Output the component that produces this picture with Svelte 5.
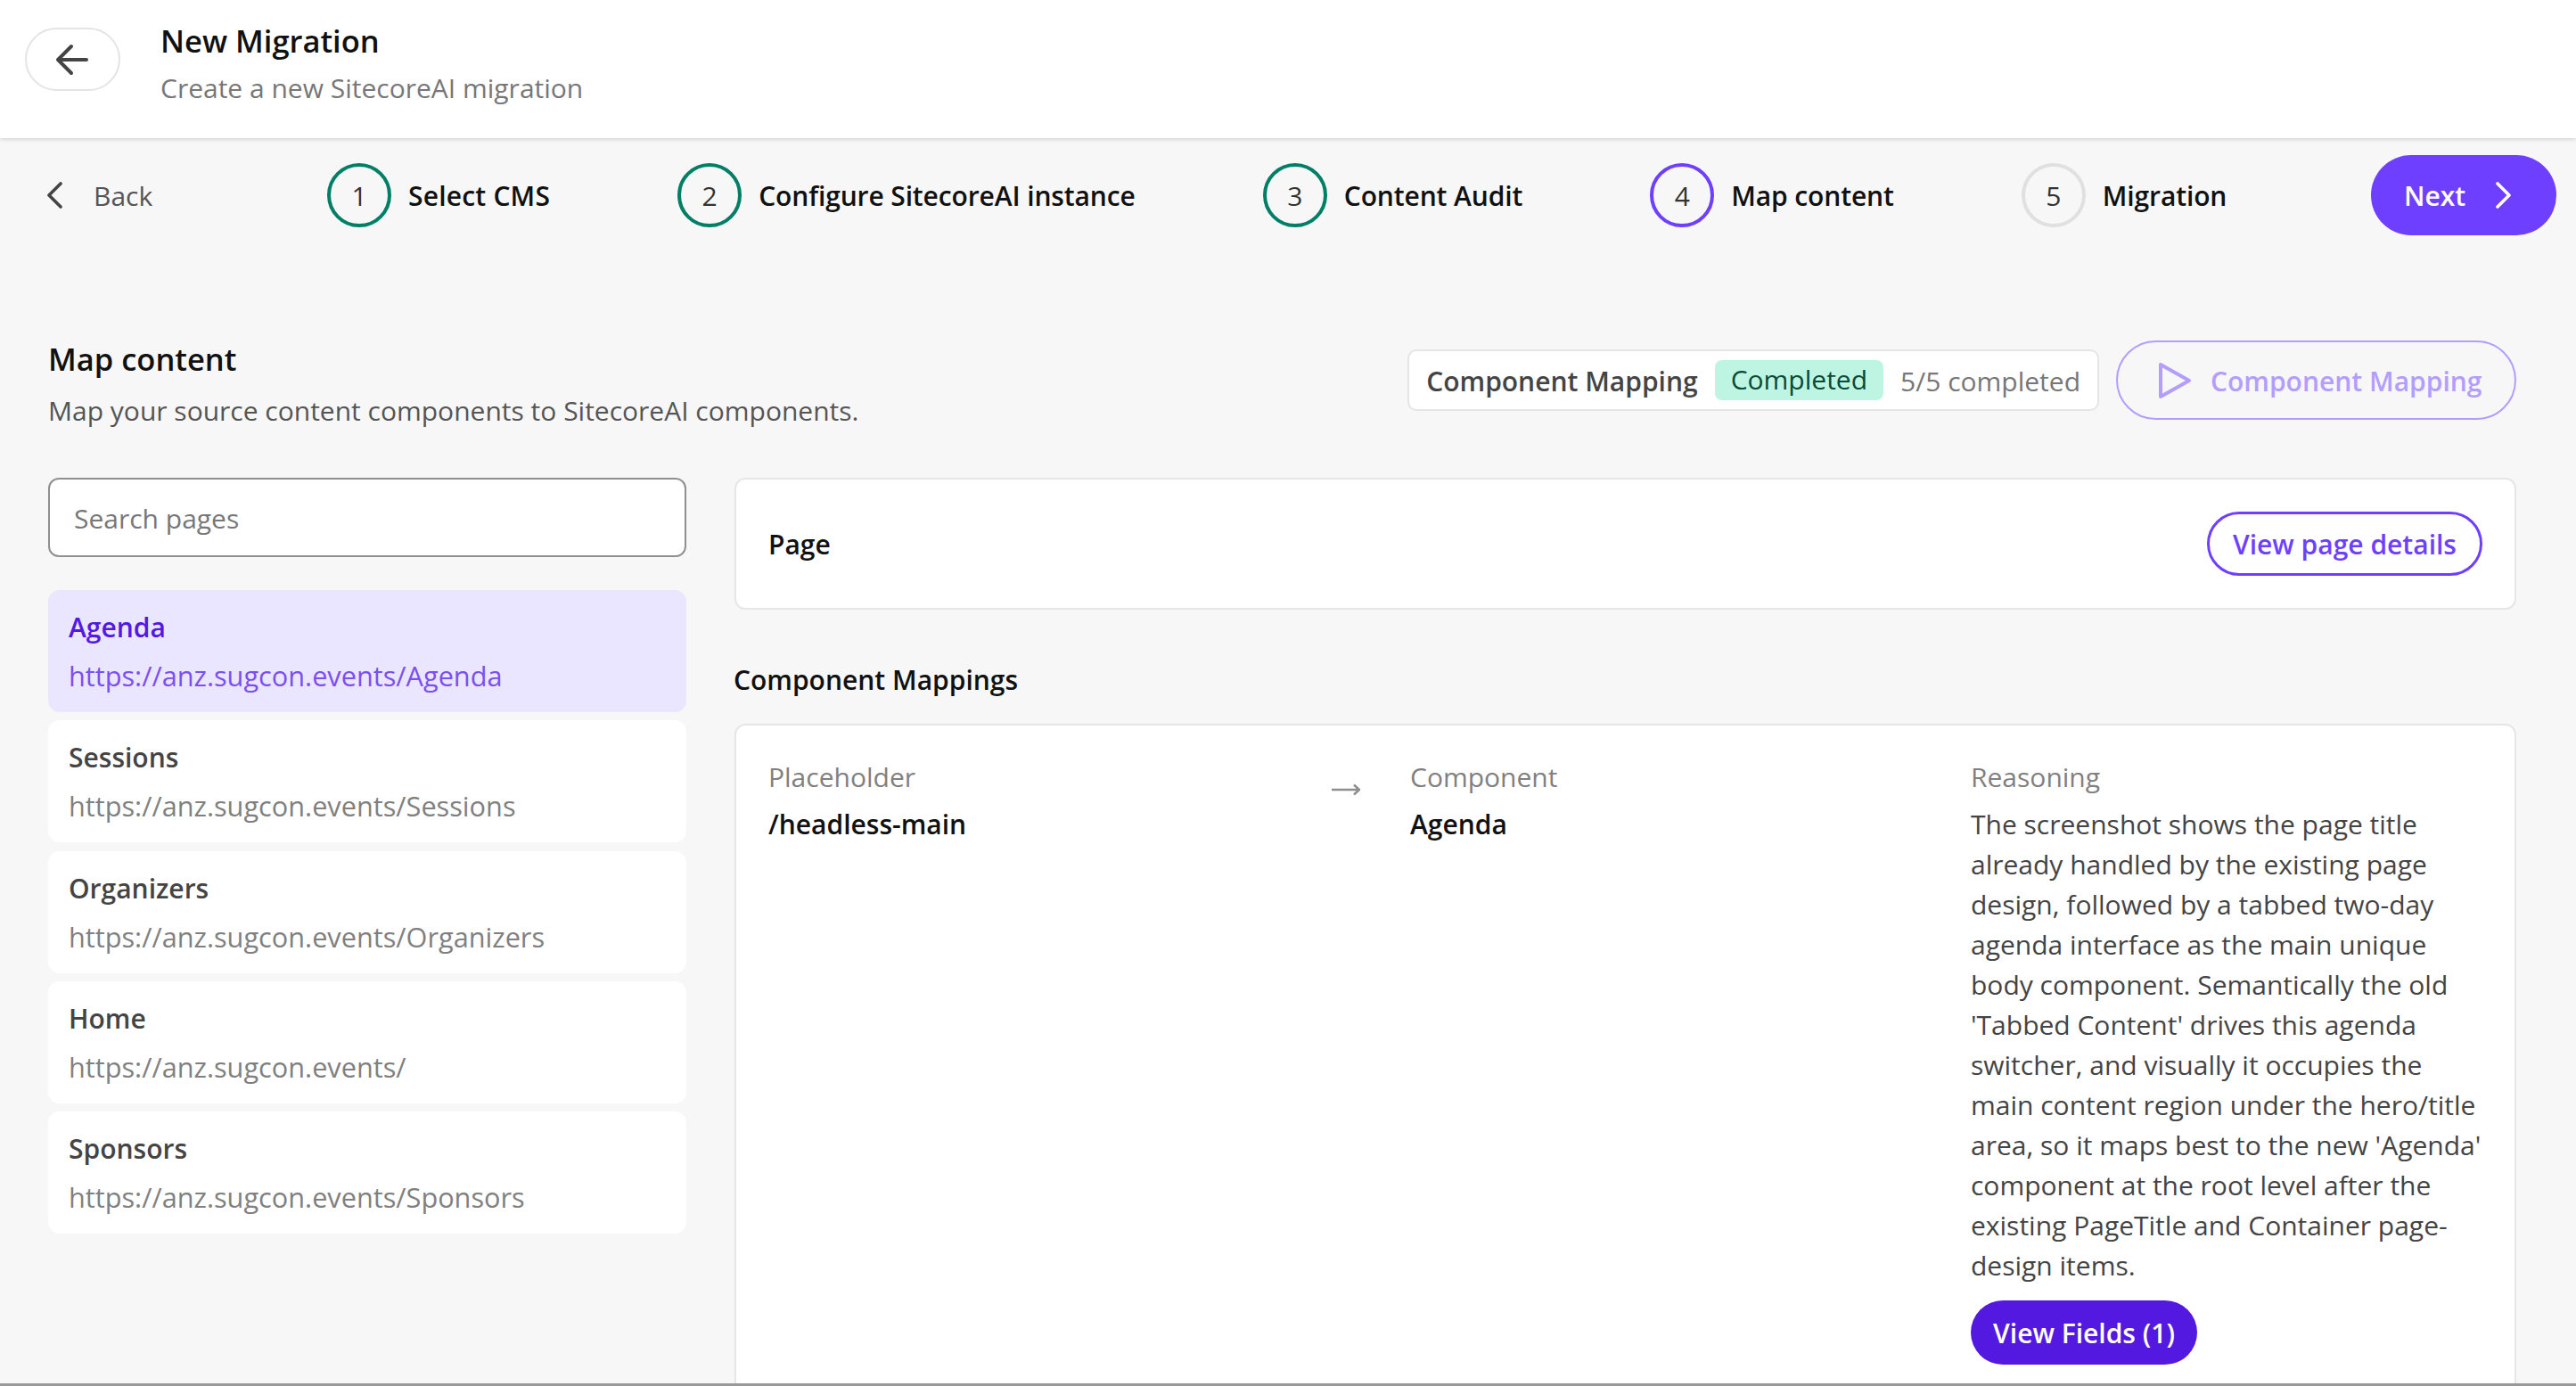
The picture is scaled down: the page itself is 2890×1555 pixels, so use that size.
<script>
  const steps = [
    { n: 1, label: "Select CMS", state: "done" },
    { n: 2, label: "Configure SitecoreAI instance", state: "done" },
    { n: 3, label: "Content Audit", state: "done" },
    { n: 4, label: "Map content", state: "active" },
    { n: 5, label: "Migration", state: "todo" }
  ];

  const pages = [
    { name: "Agenda", url: "https://anz.sugcon.events/Agenda" },
    { name: "Sessions", url: "https://anz.sugcon.events/Sessions" },
    { name: "Organizers", url: "https://anz.sugcon.events/Organizers" },
    { name: "Home", url: "https://anz.sugcon.events/" },
    { name: "Sponsors", url: "https://anz.sugcon.events/Sponsors" }
  ];

  const reasoning = [
    "The screenshot shows the page title",
    "already handled by the existing page",
    "design, followed by a tabbed two-day",
    "agenda interface as the main unique",
    "body component. Semantically the old",
    "'Tabbed Content' drives this agenda",
    "switcher, and visually it occupies the",
    "main content region under the hero/title",
    "area, so it maps best to the new 'Agenda'",
    "component at the root level after the",
    "existing PageTitle and Container page-",
    "design items."
  ];

  let selected = "Agenda";
</script>

<div class="page">
  <header class="topbar">
    <button class="round-back" aria-label="Go back">
      <svg width="40" height="40" viewBox="0 0 40 40" fill="none" stroke="#444" stroke-width="4" stroke-linecap="round" stroke-linejoin="round">
        <path d="M36 20H5M19 5 4 20l15 15" />
      </svg>
    </button>
    <div class="topbar-text">
      <h1>New Migration</h1>
      <p>Create a new SitecoreAI migration</p>
    </div>
  </header>

  <nav class="stepper">
    <button class="back-link">
      <svg width="20" height="30" viewBox="0 0 20 30" fill="none" stroke="#444" stroke-width="3.6" stroke-linecap="round" stroke-linejoin="round">
        <path d="M16 2 3 15l13 13" />
      </svg>
      <span>Back</span>
    </button>
    <ol class="steps">
      {#each steps as step}
        <li class="step {step.state}">
          <span class="circle">{step.n}</span>
          <span class="step-label">{step.label}</span>
        </li>
      {/each}
    </ol>
    <button class="next">
      <span>Next</span>
      <svg width="20" height="30" viewBox="0 0 20 30" fill="none" stroke="#fff" stroke-width="3.6" stroke-linecap="round" stroke-linejoin="round">
        <path d="M4 2l13 13L4 28" />
      </svg>
    </button>
  </nav>

  <main class="content">
    <div class="section-head">
      <div>
        <h2>Map content</h2>
        <p>Map your source content components to SitecoreAI components.</p>
      </div>
      <div class="section-actions">
        <div class="status">
          <span class="status-name">Component Mapping</span>
          <span class="badge">Completed</span>
          <span class="status-count">5/5 completed</span>
        </div>
        <button class="run" disabled>
          <svg width="40" height="42" viewBox="0 0 40 42" fill="none" stroke="#b39dff" stroke-width="4" stroke-linejoin="round">
            <path d="M4 3v36l32-18z" />
          </svg>
          <span>Component Mapping</span>
        </button>
      </div>
    </div>

    <div class="columns">
      <aside class="sidebar">
        <input class="search" type="text" placeholder="Search pages" />
        <ul class="page-list">
          {#each pages as p}
            <li class="page-item" class:selected={p.name === selected}>
              <div class="page-name">{p.name}</div>
              <div class="page-url">{p.url}</div>
            </li>
          {/each}
        </ul>
      </aside>

      <section class="detail">
        <div class="card page-card">
          <span class="page-title">Page</span>
          <button class="outline">View page details</button>
        </div>

        <h3>Component Mappings</h3>

        <div class="card mapping">
          <div class="col">
            <div class="label">Placeholder</div>
            <div class="value">/headless-main</div>
          </div>
          <div class="arrow">
            <svg width="32" height="16" viewBox="0 0 32 16" fill="none" stroke="#8f8f8f" stroke-width="2.6">
              <path d="M0 9h31M25 3.5 31 9l-6 5.5" />
            </svg>
          </div>
          <div class="col">
            <div class="label">Component</div>
            <div class="value">Agenda</div>
          </div>
          <div class="col reason">
            <div class="label">Reasoning</div>
            <p>
              {#each reasoning as line}
                <span>{line}</span>
              {/each}
            </p>
            <button class="fields">View Fields (1)</button>
          </div>
        </div>
      </section>
    </div>
  </main>
  <div class="edge"></div>
</div>

<style>
  :global(body) {
    margin: 0;
    background: #f7f7f7;
    font-family: "Open Sans", "Noto Sans", sans-serif;
  }

  button {
    font-family: inherit;
    cursor: pointer;
  }

  .page {
    width: 2890px;
    height: 1555px;
    overflow: hidden;
    display: flex;
    flex-direction: column;
    position: relative;
    color: #111;
    font-size: 30px;
  }

  .topbar {
    height: 155px;
    flex: none;
    background: #fff;
    box-shadow: 0 1px 5px rgba(0, 0, 0, 0.18);
    display: flex;
    align-items: flex-start;
    padding: 31px 0 0 28px;
    box-sizing: border-box;
    gap: 45px;
    position: relative;
  }

  .round-back {
    width: 107px;
    height: 71px;
    border-radius: 36px;
    border: 2px solid #e4e4e4;
    background: #fff;
    display: flex;
    align-items: center;
    justify-content: center;
    padding: 0 1px 0 0;
  }

  .topbar-text {
    margin-top: -9px;
  }

  h1 {
    margin: 0;
    font-size: 34.5px;
    font-weight: 600;
    line-height: 48px;
    color: #111;
  }

  .topbar-text p {
    margin: 8px 0 0;
    font-size: 30px;
    line-height: 42px;
    color: #777;
  }

  .stepper {
    display: flex;
    align-items: center;
    height: 90px;
    margin-top: 19px;
    padding: 0 22px 0 52px;
    flex: none;
  }

  .back-link {
    display: flex;
    align-items: center;
    gap: 33px;
    background: none;
    border: 0;
    padding: 0;
    font-size: 30px;
    color: #555;
    width: 315px;
  }

  .steps {
    list-style: none;
    margin: 0;
    padding: 0;
    display: flex;
    gap: 143px;
    flex: 1;
  }

  .step {
    display: flex;
    align-items: center;
    gap: 19px;
  }

  .step:first-child .step-label {
    letter-spacing: 0.2px;
  }

  .circle {
    width: 72px;
    height: 72px;
    box-sizing: border-box;
    border-radius: 50%;
    border: 4px solid #007f66;
    display: flex;
    align-items: center;
    justify-content: center;
    font-size: 30px;
    color: #333;
  }

  .step.active .circle {
    border-color: #6e3fff;
  }

  .step.todo .circle {
    border-color: #e0e0e0;
  }

  .step-label {
    font-size: 30px;
    font-weight: 600;
    color: #111;
    white-space: nowrap;
    letter-spacing: -0.12px;
  }

  .next {
    width: 208px;
    height: 90px;
    border-radius: 45px;
    border: 0;
    background: #6e3fff;
    color: #fff;
    font-size: 30px;
    font-weight: 600;
    display: flex;
    align-items: center;
    gap: 32px;
    padding: 0 0 0 37px;
  }

  .content {
    padding: 0 67px 0 54px;
  }

  .section-head {
    display: flex;
    justify-content: space-between;
    align-items: flex-start;
    margin-top: 115px;
  }

  h2 {
    margin: 0;
    font-size: 34.5px;
    font-weight: 600;
    line-height: 48px;
  }

  .section-head p {
    margin: 13px 0 0;
    font-size: 30px;
    line-height: 42px;
    color: #555;
  }

  .section-actions {
    display: flex;
    align-items: center;
    gap: 19px;
    margin-top: 3px;
  }

  .status {
    display: flex;
    align-items: center;
    height: 69px;
    box-sizing: border-box;
    background: #fff;
    border: 2px solid #e5e5e5;
    border-radius: 10px;
    padding: 2px 19px 0;
    gap: 19px;
    white-space: nowrap;
  }

  .status-name {
    font-weight: 600;
    color: #444;
  }

  .badge {
    background: #bdf5e2;
    color: #0b4a38;
    border-radius: 8px;
    padding: 0 18px;
    height: 45px;
    line-height: 43px;
    margin-top: -2px;
  }

  .status-count {
    color: #777;
  }

  .run {
    display: flex;
    align-items: center;
    gap: 20px;
    width: 449px;
    height: 89px;
    padding: 0 0 0 44px;
    box-sizing: border-box;
    border: 2px solid #b39dff;
    border-radius: 45px;
    background: none;
    color: #b39dff;
    font-size: 30px;
    font-weight: 600;
    white-space: nowrap;
  }

  .run span {
    padding-top: 2px;
  }

  .columns {
    display: grid;
    grid-template-columns: 716px 1fr;
    gap: 54px;
    margin-top: 54px;
  }

  .search {
    display: block;
    width: 716px;
    height: 89px;
    box-sizing: border-box;
    border: 2px solid #8f8f8f;
    border-radius: 12px;
    padding: 2px 27px 0;
    font: inherit;
    font-size: 30px;
    background: #fff;
    color: #111;
  }

  .search::placeholder {
    color: #777;
    opacity: 1;
  }

  .page-list {
    list-style: none;
    margin: 37px 0 0;
    padding: 0;
    display: flex;
    flex-direction: column;
    gap: 9.3px;
  }

  .page-item {
    height: 137px;
    box-sizing: border-box;
    background: #fff;
    border-radius: 13px;
    padding: 21px 23px 0;
  }

  .page-item.selected {
    background: #ebe6ff;
  }

  .page-name {
    font-weight: 600;
    line-height: 42px;
    color: #444;
  }

  .page-url {
    margin-top: 12px;
    font-size: 30.7px;
    line-height: 42px;
    color: #808080;
    white-space: nowrap;
  }

  .selected .page-name {
    color: #5319e0;
  }

  .selected .page-url {
    color: #7b4ff0;
  }

  .card {
    background: #fff;
    border: 2px solid #e6e6e6;
    border-radius: 12px;
    box-sizing: border-box;
  }

  .page-card {
    height: 148px;
    display: flex;
    align-items: center;
    justify-content: space-between;
    padding: 0 36px;
  }

  .page-title {
    font-weight: 600;
  }

  .outline {
    width: 309px;
    height: 72px;
    border: 3px solid #6e3fff;
    border-radius: 36px;
    background: #fff;
    color: #6e3fff;
    font-size: 30px;
    font-weight: 600;
    padding: 0;
    white-space: nowrap;
  }

  h3 {
    margin: 55px 0 25px;
    font-size: 30px;
    font-weight: 600;
    line-height: 48px;
    margin-left: -1px;
  }

  .mapping {
    height: 900px;
    display: grid;
    grid-template-columns: 632px 88px 629px 1fr;
    padding: 37px 36px 0;
  }

  .label {
    line-height: 42px;
    color: #808080;
  }

  .value {
    margin-top: 11px;
    line-height: 42px;
    font-weight: 600;
    color: #111;
  }

  .arrow {
    padding-top: 10px;
  }

  .reason p {
    margin: 9px 0 0;
    line-height: 45px;
    color: #444;
  }

  .reason p span {
    display: block;
    white-space: nowrap;
  }

  .fields {
    display: block;
    margin-top: 17px;
    width: 254px;
    height: 72px;
    border: 0;
    border-radius: 36px;
    background: #5319e0;
    color: #fff;
    font-size: 30px;
    font-weight: 600;
    padding: 0;
    white-space: nowrap;
  }

  .edge {
    position: absolute;
    left: 0;
    right: 0;
    bottom: 0;
    height: 3px;
    background: #999;
  }
</style>
